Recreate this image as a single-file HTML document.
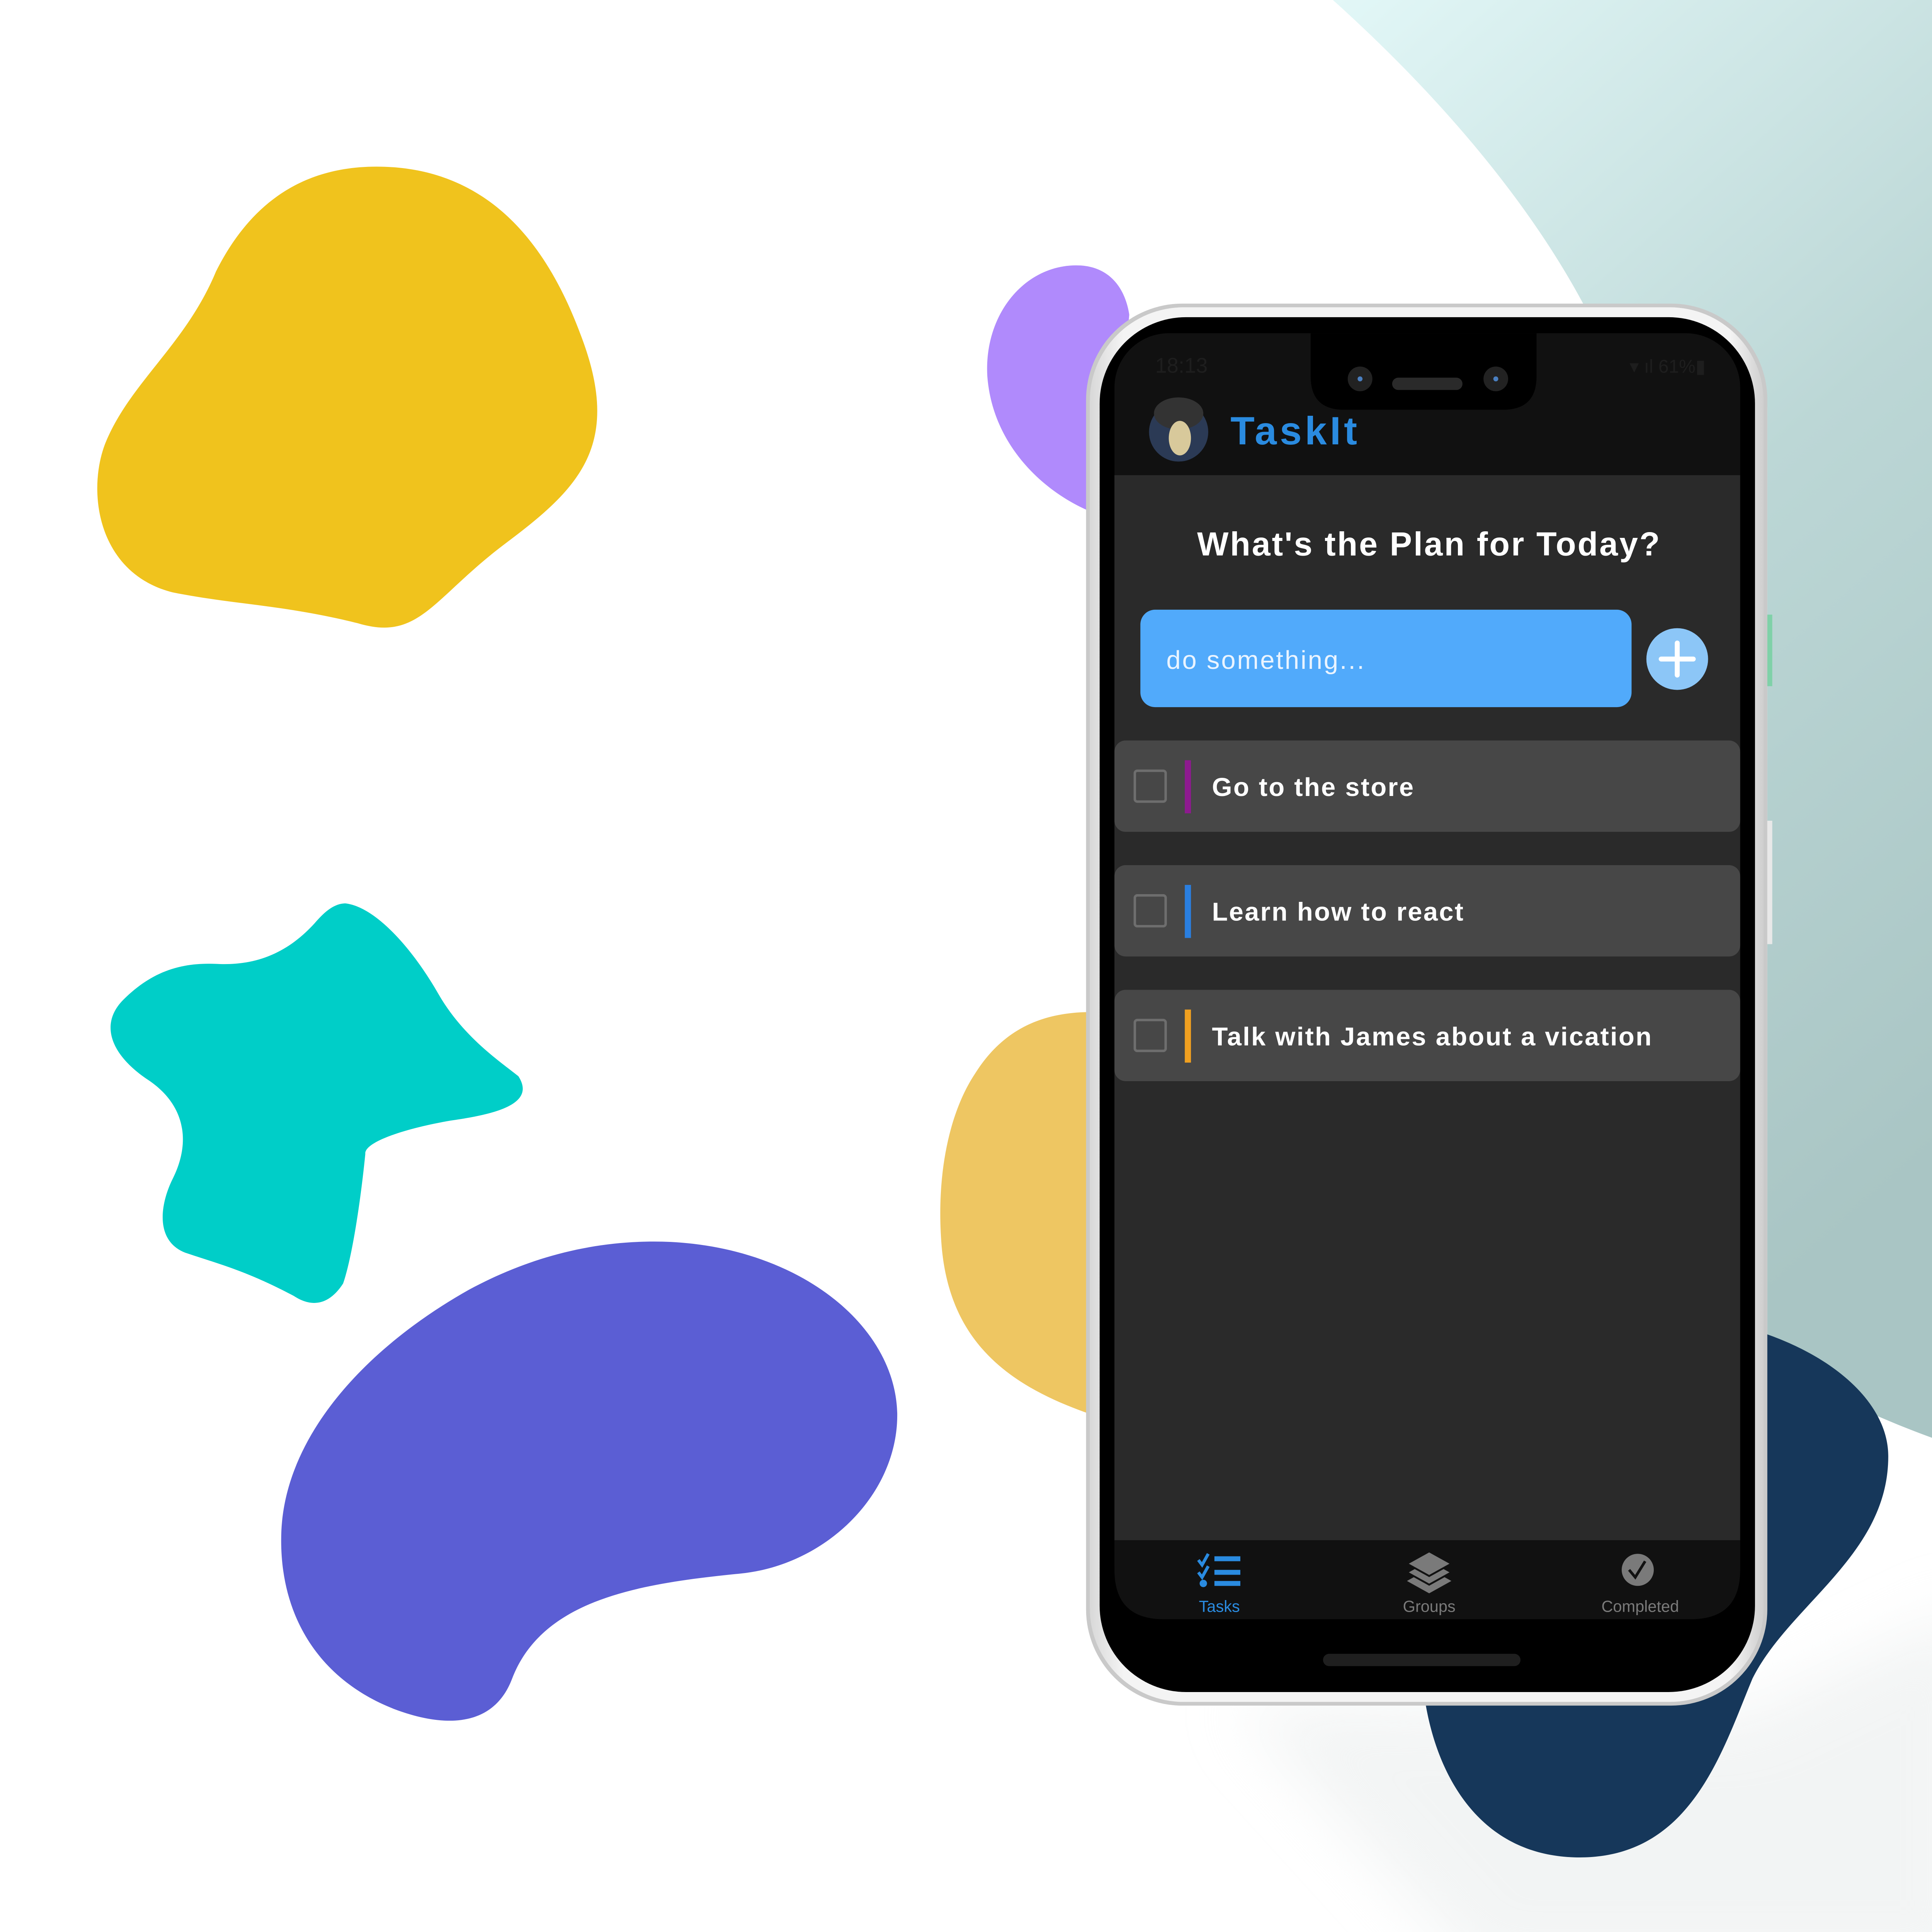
<!DOCTYPE html>
<html><head><meta charset="utf-8"><style>html,body{margin:0;padding:0;background:#fff;width:5120px;height:5120px;overflow:hidden}svg{position:absolute;left:0;top:0;display:block}</style></head>
<body>
<svg width="5120" height="5120" viewBox="0 0 1603 1603" xmlns="http://www.w3.org/2000/svg" font-family="Liberation Sans, sans-serif">
<defs>
<linearGradient id="bg" x1="0" y1="0" x2="0.4" y2="1">
<stop offset="0" stop-color="#e2f7f7"/><stop offset="0.5" stop-color="#bcd7d6"/><stop offset="1" stop-color="#a9c5c4"/>
</linearGradient>
<linearGradient id="body" x1="0" y1="0" x2="1" y2="0">
<stop offset="0" stop-color="#d8d8d8"/><stop offset="0.05" stop-color="#f4f4f4"/><stop offset="0.95" stop-color="#f4f4f4"/><stop offset="1" stop-color="#cfcfcf"/>
</linearGradient>
<filter id="blur" x="-20%" y="-20%" width="140%" height="140%"><feGaussianBlur stdDeviation="25"/></filter>
</defs>
<rect width="1603" height="1603" fill="#fff"/>
<path d="M1080 0 C1180 90 1250 180 1290 260 L1432 330 L1432 1100 C1480 1130 1530 1155 1610 1180 L1610 0 Z" fill="url(#bg)"/>
<path d="M1000 1380 L1410 1390 L1600 1300 L1600 1600 L1200 1600 Z" fill="#e6eaea" opacity="0.5" filter="url(#blur)"/>
<!-- blobs -->
<path d="M305 135 C390 135 440 190 470 270 C505 360 470 395 410 440 C350 485 340 520 290 505 C230 490 190 490 140 480 C80 465 70 400 85 360 C105 310 150 280 175 220 C205 160 250 135 305 135 Z" fill="#f0c31d"/>
<path d="M280 732 C305 735 335 770 355 805 C375 840 405 860 420 872 C435 895 400 903 365 908 C330 914 295 925 296 935 C292 975 285 1020 278 1040 C265 1060 250 1058 238 1050 C200 1030 180 1025 150 1015 C125 1005 130 975 140 955 C155 925 150 895 120 875 C90 855 80 830 100 810 C125 785 150 780 175 781 C210 783 235 770 255 748 C262 740 270 732 280 732 Z" fill="#00cec8"/>
<path d="M530 1006 C640 1006 725 1070 727 1145 C728 1210 670 1268 600 1275 C520 1283 440 1295 415 1360 C400 1400 360 1400 320 1385 C260 1362 225 1310 228 1240 C232 1160 300 1090 380 1045 C430 1018 480 1006 530 1006 Z" fill="#5b5ed4"/>
<path d="M872 215 C900 215 912 235 915 255 L900 420 C860 410 805 370 800 305 C797 255 830 215 872 215 Z" fill="#b08afc"/>
<path d="M885 820 L890 1148 C820 1125 770 1090 763 1010 C758 950 770 900 790 870 C815 830 850 820 885 820 Z" fill="#eec662"/>
<path d="M1390 1070 C1470 1085 1530 1130 1530 1180 C1530 1260 1450 1300 1420 1360 C1395 1420 1370 1505 1280 1505 C1200 1505 1165 1440 1155 1380 L1390 1370 Z" fill="#16375a"/>
<!-- phone -->
<rect x="880" y="246" width="552" height="1136" rx="78" fill="#c9c9c9"/>
<rect x="883" y="249" width="546" height="1130" rx="76" fill="url(#body)"/>
<rect x="891" y="257" width="531" height="1114" rx="70" fill="#000"/>
<rect x="1432" y="498" width="4" height="58" fill="#7fd1a8"/>
<rect x="1432" y="665" width="4" height="100" fill="#e8e8e8"/>
<rect x="903" y="270" width="507" height="1042" rx="44" fill="#111"/>
<rect x="903" y="385" width="507" height="863" fill="#2a2a2a"/>
<path d="M1062 270 L1245 270 L1245 305 Q1245 332 1218 332 L1089 332 Q1062 332 1062 305 Z" fill="#000"/>
<circle cx="1102" cy="307" r="10" fill="#222"/><circle cx="1102" cy="307" r="2" fill="#4a7fc0"/>
<circle cx="1212" cy="307" r="10" fill="#222"/><circle cx="1212" cy="307" r="2" fill="#4a7fc0"/>
<rect x="1128" y="306" width="57" height="10" rx="5" fill="#2a2a2a"/>
<text x="936" y="302" font-size="17" fill="#1e1e1e">18:13</text>
<text x="1382" y="302" font-size="15" fill="#1e1e1e" text-anchor="end">▾ ıl 61%▮</text>
<!-- header -->
<circle cx="955" cy="350" r="24" fill="#2b3a55"/>
<ellipse cx="955" cy="335" rx="20" ry="13" fill="#333"/>
<ellipse cx="956" cy="355" rx="9" ry="14" fill="#d8c99b"/>
<text x="997" y="360" font-size="32" font-weight="bold" fill="#2a8be0" letter-spacing="2.5">TaskIt</text>
<text x="1158" y="450" font-size="27" font-weight="bold" fill="#fff" text-anchor="middle" letter-spacing="1.2">What's the Plan for Today?</text>
<rect x="924" y="494" width="398" height="79" rx="12" fill="#51aafb"/>
<text x="945" y="542" font-size="21" fill="#eaf4ff" letter-spacing="1.2">do something...</text>
<circle cx="1359" cy="534" r="25" fill="#8cc6f7"/>
<path d="M1359 521 V547 M1346 534 H1372" stroke="#fff" stroke-width="4" stroke-linecap="round"/>
<!-- tasks -->
<g font-size="21" font-weight="bold" fill="#fff" letter-spacing="1">
<rect x="903" y="600" width="507" height="74" rx="9" fill="#474747"/>
<rect x="919.5" y="624.5" width="25" height="25" rx="2" fill="none" stroke="#6e6e6e" stroke-width="2"/>
<rect x="960" y="616" width="5" height="43" fill="#8e1a8f"/>
<text x="982" y="645">Go to the store</text>
<rect x="903" y="701" width="507" height="74" rx="9" fill="#474747"/>
<rect x="919.5" y="725.5" width="25" height="25" rx="2" fill="none" stroke="#6e6e6e" stroke-width="2"/>
<rect x="960" y="717" width="5" height="43" fill="#2a7fe0"/>
<text x="982" y="746">Learn how to react</text>
<rect x="903" y="802" width="507" height="74" rx="9" fill="#474747"/>
<rect x="919.5" y="826.5" width="25" height="25" rx="2" fill="none" stroke="#6e6e6e" stroke-width="2"/>
<rect x="960" y="818" width="5" height="43" fill="#f0a020"/>
<text x="982" y="847">Talk with James about a vication</text>
</g>
<!-- nav -->
<path d="M903 1248 H1410 V1272 Q1410 1312 1370 1312 H943 Q903 1312 903 1272 Z" fill="#111"/>
<g fill="#2a8be0">
<path d="M971 1264 L974 1268 L979 1259" stroke="#2a8be0" stroke-width="2.5" fill="none"/>
<rect x="984" y="1261" width="21" height="4"/>
<path d="M971 1274 L974 1278 L979 1269" stroke="#2a8be0" stroke-width="2.5" fill="none"/>
<rect x="984" y="1272" width="21" height="4"/>
<circle cx="975" cy="1283" r="3"/>
<rect x="984" y="1281" width="21" height="4"/>
</g>
<text x="988" y="1306" font-size="13" fill="#2a8be0" text-anchor="middle">Tasks</text>
<g fill="#7a7a7a">
<path d="M1140 1281 L1158 1271 L1176 1281 L1158 1291 Z"/>
<path d="M1140 1274 L1158 1264 L1176 1274 L1158 1284 Z" stroke="#111" stroke-width="1.5"/>
<path d="M1140 1267 L1158 1257 L1176 1267 L1158 1277 Z" stroke="#111" stroke-width="1.5"/>
</g>
<text x="1158" y="1306" font-size="13" fill="#7a7a7a" text-anchor="middle">Groups</text>
<circle cx="1327" cy="1272" r="13" fill="#7a7a7a"/>
<path d="M1320 1272 L1325 1278 L1333 1265" stroke="#111" stroke-width="2.2" fill="none"/>
<text x="1329" y="1306" font-size="13" fill="#7a7a7a" text-anchor="middle">Completed</text>
<rect x="1072" y="1340" width="160" height="10" rx="5" fill="#1f1f1f"/>
</svg>
</body></html>
